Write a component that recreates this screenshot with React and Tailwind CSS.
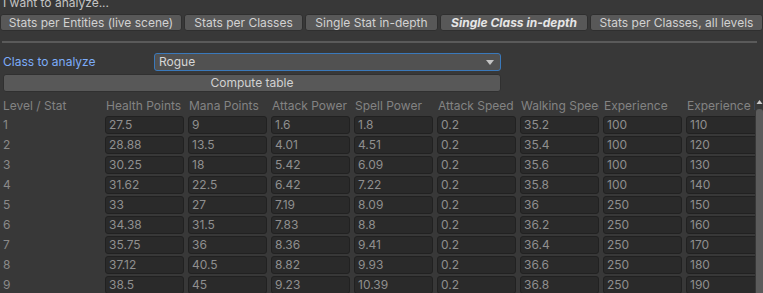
const tabs = [
  { label: "Stats per Entities (live scene)", w: "w-[182px]" },
  { label: "Stats per Classes", w: "w-[119px]" },
  { label: "Single Stat in-depth", w: "w-[133px]" },
  { label: "Single Class in-depth", w: "w-[148px]", active: true },
  { label: "Stats per Classes, all levels", w: "w-[173px]" },
];

const headers = [
  "Health Points",
  "Mana Points",
  "Attack Power",
  "Spell Power",
  "Attack Speed",
  "Walking Speed",
  "Experience",
  "Experience left",
];

const rows = [
  ["27.5", "9", "1.6", "1.8", "0.2", "35.2", "100", "110"],
  ["28.88", "13.5", "4.01", "4.51", "0.2", "35.4", "100", "120"],
  ["30.25", "18", "5.42", "6.09", "0.2", "35.6", "100", "130"],
  ["31.62", "22.5", "6.42", "7.22", "0.2", "35.8", "100", "140"],
  ["33", "27", "7.19", "8.09", "0.2", "36", "250", "150"],
  ["34.38", "31.5", "7.83", "8.8", "0.2", "36.2", "250", "160"],
  ["35.75", "36", "8.36", "9.41", "0.2", "36.4", "250", "170"],
  ["37.12", "40.5", "8.82", "9.93", "0.2", "36.6", "250", "180"],
  ["38.5", "45", "9.23", "10.39", "0.2", "36.8", "250", "190"],
];

export default function App() {
  return (
    <div className="w-[763px] h-[293px] overflow-hidden bg-[#383838] text-[12px] text-[#c4c4c4] font-['Inter','Liberation_Sans',sans-serif]">
      <div className="h-[16px] -mt-[5px] leading-[16px] pl-[3px]">I want to analyze...</div>

      <div className="flex gap-[2px] mt-[3px] h-[17px] w-[790px]">
        {tabs.map((t) => (
          <div
            key={t.label}
            className={`${t.w} shrink-0 flex items-center justify-center leading-none bg-[#585858] border border-[#2f2f2f] rounded-[3px] whitespace-nowrap ${
              t.active ? "font-bold italic text-[#e6e6e6]" : "text-[#d2d2d2]"
            }`}
          >
            {t.label}
          </div>
        ))}
      </div>

      <div className="mt-[10px] ml-[2px] w-[755px] h-[2px] bg-[#5a5a5a]" />

      <div className="flex items-center mt-[10px] h-[18px]">
        <div className="w-[154px] pl-[3px] text-[#7cacf8]">Class to analyze</div>
        <div className="w-[347px] h-[18px] flex items-center justify-between bg-[#515151] border border-[#3a79bb] rounded-[3px] pl-[4px] pr-[6px] text-[#d6d6d6]">
          <span>Rogue</span>
          <svg width="8" height="5" viewBox="0 0 8 5">
            <path d="M0 0h8L4 5z" fill="#c4c4c4" />
          </svg>
        </div>
      </div>

      <div className="mt-[3px] ml-[3px] w-[498px] h-[18px] flex items-center justify-center bg-[#585858] border border-[#303030] rounded-[3px] text-[#d2d2d2]">
        Compute table
      </div>

      <div className="flex mt-[5px]">
        <div className="w-[755px] overflow-hidden">
          <div className="flex h-[18px] items-center w-[900px] text-[#838383] whitespace-nowrap">
            <div className="w-[105px] shrink-0 pl-[3px]">Level / Stat</div>
            {headers.map((h) => (
              <div key={h} className="w-[79px] mr-[4px] shrink-0 overflow-hidden pl-[1px]">
                {h}
              </div>
            ))}
          </div>
          <div className="flex flex-col gap-[2px] mt-[1px]">
            {rows.map((r, i) => (
              <div key={i} className="flex items-center h-[18px] w-[900px]">
                <div className="w-[105px] shrink-0 pl-[3px] text-[#8a8a8a]">{i + 1}</div>
                {r.map((v, j) => (
                  <div
                    key={j}
                    className="w-[79px] mr-[4px] shrink-0 h-[18px] flex items-center pl-[3px] bg-[#2a2a2a] border border-[#212121] rounded-[3px] text-[#8f8f8f]"
                  >
                    {v}
                  </div>
                ))}
              </div>
            ))}
          </div>
        </div>
        <div className="ml-[1px] w-[7px] flex flex-col items-center">
          <svg width="7" height="6" viewBox="0 0 7 6" className="mt-[2px]">
            <path d="M0.5 5h6L3.5 1z" fill="#c8c8c8" />
          </svg>
          <div className="mt-[4px] w-[7px] h-[200px] bg-[#5b5b5b] rounded-t-[3px]" />
        </div>
      </div>
    </div>
  );
}
